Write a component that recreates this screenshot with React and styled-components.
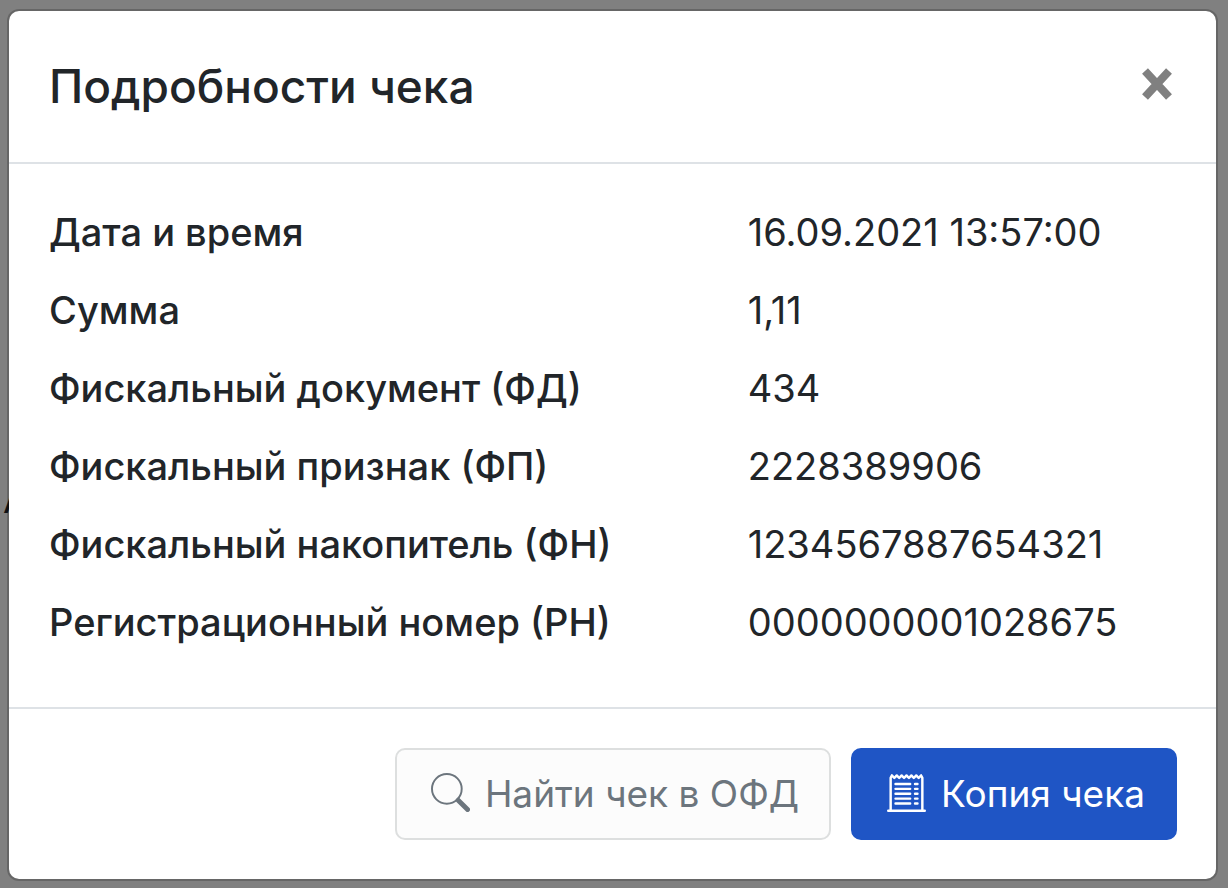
import * as React from "react"
import styled, { createGlobalStyle } from "styled-components"
import { BsReceiptCutoff } from "react-icons/bs"

const details = [
  { label: "Дата и время", value: "16.09.2021 13:57:00" },
  { label: "Сумма", value: "1,11" },
  { label: "Фискальный документ (ФД)", value: "434" },
  { label: "Фискальный признак (ФП)", value: "2228389906" },
  { label: "Фискальный накопитель (ФН)", value: "1234567887654321" },
  { label: "Регистрационный номер (РН)", value: "0000000001028675" },
]

const App = () => {
  return (
    <Backdrop>
      <GlobalStyle />
      <PageText aria-hidden="true">А</PageText>
      <Modal role="dialog" aria-modal="true" aria-labelledby="receipt-title">
        <Header>
          <Title id="receipt-title">Подробности чека</Title>
          <CloseButton type="button" aria-label="Закрыть">
            <svg width="32" height="34" viewBox="0 0 32 34" aria-hidden="true">
              <path d="M4 4L28 30M28 4L4 30" fill="none" stroke="currentColor" strokeWidth="8" />
            </svg>
          </CloseButton>
        </Header>
        <Body>
          <Table>
            <tbody>
              {details.map((row) => (
                <tr key={row.label}>
                  <Label scope="row">{row.label}</Label>
                  <Value>{row.value}</Value>
                </tr>
              ))}
            </tbody>
          </Table>
        </Body>
        <Footer>
          <Button type="button">
            <SearchIcon />
            Найти чек в ОФД
          </Button>
          <Button type="button" $primary>
            <BsReceiptCutoff aria-hidden="true" />
            Копия чека
          </Button>
        </Footer>
      </Modal>
    </Backdrop>
  )
}

export default App

const SearchIcon = () => (
  <svg viewBox="0 0 16 16" fill="currentColor" aria-hidden="true">
    <path d="M10.442 10.442a1 1 0 0 1 1.415 0l3.85 3.85a1 1 0 0 1-1.414 1.415l-3.85-3.85a1 1 0 0 1 0-1.415z" />
    <path d="M6.500 12.200a5.700 5.700 0 1 0 0-11.400 5.700 5.700 0 0 0 0 11.400zM13 6.500a6.500 6.500 0 1 1-13 0 6.500 6.500 0 0 1 13 0z" />
  </svg>
)

const GlobalStyle = createGlobalStyle`
    *, *::before, *::after {
        box-sizing: border-box;
    }
    body {
        margin: 0;
        background: #808080;
        color: #212529;
        font-family: Inter, "Liberation Sans", sans-serif;
        font-size: 38px;
        line-height: 58px;
    }
`

const Backdrop = styled.div `
    position: relative;
    min-height: 100vh;
    padding: 9px 10px 8px 7px;
`

/* page content that peeks out from under the dialog */
const PageText = styled.span `
    position: absolute;
    left: 3px;
    top: 470px;
    color: #111214;
`

const Modal = styled.div `
    position: relative;
    background: #fff;
    background-clip: padding-box;
    border: 2px solid rgba(0, 0, 0, 0.2);
    border-radius: 12px;
`

const Header = styled.div `
    display: flex;
    align-items: center;
    justify-content: space-between;
    padding: 40px;
    border-bottom: 2px solid #dee2e6;
`

const Title = styled.h5 `
    margin: 0;
    font-size: 46px;
    font-weight: 500;
    line-height: 71px;
`

const CloseButton = styled.button `
    display: flex;
    padding: 0 3px 5px;
    border: 0;
    background: none;
    color: #808080;
    cursor: pointer;
`

const Body = styled.div `
    padding: 29px 40px 46px;
`

const Table = styled.table `
    width: 100%;
    table-layout: fixed;
    border-collapse: collapse;
`

const Label = styled.th `
    width: 62%;
    padding: 10px 0;
    font-weight: 500;
    text-align: left;
`

const Value = styled.td `
    padding: 10px 0;
`

const Footer = styled.div `
    display: flex;
    justify-content: flex-end;
    gap: 20px;
    padding: 39px;
    border-top: 2px solid #dee2e6;
`

const Button = styled.button `
    display: flex;
    align-items: center;
    gap: 15px;
    padding: 15px 30px 15px 34px;
    border: 2px solid ${(props) => (props.$primary ? "#1f55c5" : "#dddfdf")};
    border-radius: 10px;
    background: ${(props) => (props.$primary ? "#1f55c5" : "#fcfcfc")};
    color: ${(props) => (props.$primary ? "#fff" : "#6c757d")};
    font: inherit;
    font-size: 37px;
    line-height: 58px;
    cursor: pointer;

    svg {
        width: 39px;
        height: 39px;
        margin-bottom: 4px;
    }
`
